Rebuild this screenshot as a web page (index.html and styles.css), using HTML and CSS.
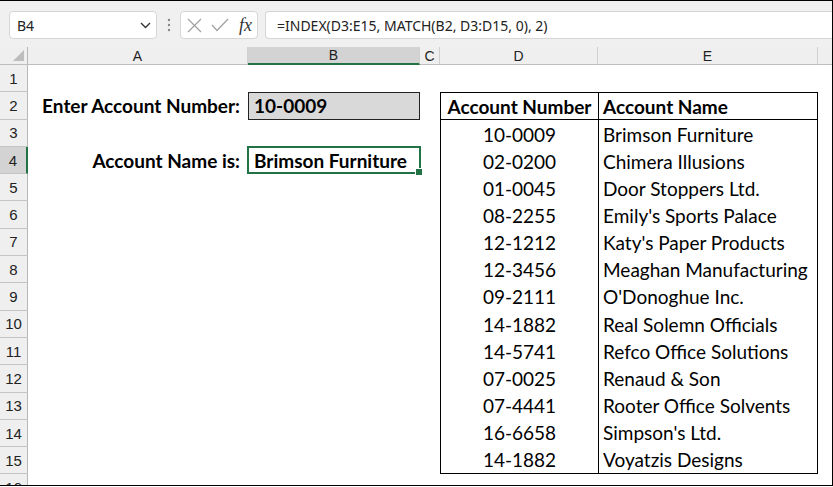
FILE: index.html
```html
<!DOCTYPE html>
<html>
<head>
<meta charset="utf-8">
<link rel="stylesheet" href="styles.css">
</head>
<body>
<div class="window">
  <div class="fbar">
    <div class="namebox">
      <span class="ref">B4</span>
      <svg class="chev" width="11" height="7" viewBox="0 0 11 7"><polyline points="1,1 5.5,5.5 10,1" fill="none" stroke="#333" stroke-width="1.4"/></svg>
    </div>
    <div class="dots">
      <svg width="4" height="14" viewBox="0 0 4 14"><circle cx="2" cy="2" r="1.2" fill="#888"/><circle cx="2" cy="7" r="1.2" fill="#888"/><circle cx="2" cy="12" r="1.2" fill="#888"/></svg>
    </div>
    <div class="fnbox">
      <svg class="ico" width="15" height="15" viewBox="0 0 15 15"><path d="M1 1 L14 14 M14 1 L1 14" stroke="#a0a0a0" stroke-width="1.2" fill="none"/></svg>
      <svg class="ico" width="18" height="14" viewBox="0 0 18 14"><polyline points="1,7 6,12.5 17,1" fill="none" stroke="#a0a0a0" stroke-width="1.2"/></svg>
      <span class="fx">fx</span>
    </div>
    <div class="formula">=INDEX(D3:E15, MATCH(B2, D3:D15, 0), 2)</div>
  </div>
  <div class="sheet">
    <div class="colheads">
      <div class="ch corner"><svg width="11" height="11" viewBox="0 0 11 11"><polygon points="11,0 11,11 0,11" fill="#bdbdbd"/></svg></div>
      <div class="ch ca">A</div>
      <div class="ch cb sel">B</div>
      <div class="ch cc">C</div>
      <div class="ch cd">D</div>
      <div class="ch ce">E</div>
      <div class="ch cf"></div>
    </div>
    <div class="body">
      <div class="rowheads">
        <div class="rh">1</div>
        <div class="rh">2</div>
        <div class="rh">3</div>
        <div class="rh sel">4</div>
        <div class="rh">5</div>
        <div class="rh">6</div>
        <div class="rh">7</div>
        <div class="rh">8</div>
        <div class="rh">9</div>
        <div class="rh">10</div>
        <div class="rh">11</div>
        <div class="rh">12</div>
        <div class="rh">13</div>
        <div class="rh">14</div>
        <div class="rh">15</div>
        <div class="rh">16</div>
      </div>
      <div class="cells">
        <div class="label lab-2">Enter Account Number:</div>
        <div class="input">10-0009</div>
        <div class="label lab-4">Account Name is:</div>
        <div class="output">Brimson Furniture</div>
        <div class="table">
          <div class="td num th">Account Number</div>
          <div class="td name th">Account Name</div>
          <div class="td num">10-0009</div><div class="td name">Brimson Furniture</div>
          <div class="td num">02-0200</div><div class="td name">Chimera Illusions</div>
          <div class="td num">01-0045</div><div class="td name">Door Stoppers Ltd.</div>
          <div class="td num">08-2255</div><div class="td name">Emily's Sports Palace</div>
          <div class="td num">12-1212</div><div class="td name">Katy's Paper Products</div>
          <div class="td num">12-3456</div><div class="td name">Meaghan Manufacturing</div>
          <div class="td num">09-2111</div><div class="td name">O'Donoghue Inc.</div>
          <div class="td num">14-1882</div><div class="td name">Real Solemn Officials</div>
          <div class="td num">14-5741</div><div class="td name">Refco Office Solutions</div>
          <div class="td num">07-0025</div><div class="td name">Renaud &amp; Son</div>
          <div class="td num">07-4441</div><div class="td name">Rooter Office Solvents</div>
          <div class="td num">16-6658</div><div class="td name">Simpson's Ltd.</div>
          <div class="td num">14-1882</div><div class="td name">Voyatzis Designs</div>
        </div>
      </div>
    </div>
  </div>
</div>
</body>
</html>
```

FILE: styles.css
```css
* { box-sizing: border-box; }
html, body { margin: 0; padding: 0; background: #fff; }

.window {
  width: 833px;
  height: 486px;
  border: 1px solid #000;
  border-left: none;
  overflow: hidden;
  display: flex;
  flex-direction: column;
  font-family: "Noto Sans", sans-serif;
  color: #000;
}

/* formula bar */
.fbar {
  height: 46px;
  flex: none;
  background: #f0f0f0;
  display: flex;
  align-items: flex-start;
  padding: 10px 0 0 9px;
}
.namebox {
  width: 148px;
  height: 28px;
  background: #fff;
  border: 1px solid #d6d6d6;
  border-radius: 4px;
  display: flex;
  align-items: center;
  justify-content: space-between;
  padding: 0 5px 0 7px;
  font-size: 14px;
  color: #222;
}
.chev { margin-top: 1px; }
.dots {
  width: 23px;
  height: 28px;
  display: flex;
  align-items: center;
  justify-content: center;
}
.fnbox {
  width: 78px;
  height: 28px;
  background: #fff;
  border: 1px solid #d6d6d6;
  border-radius: 4px;
  display: flex;
  align-items: center;
  padding-left: 6px;
  gap: 9px;
}
.fx {
  font-family: "Liberation Serif", serif;
  font-style: italic;
  font-size: 18px;
  color: #333;
  margin-left: 1px;
  line-height: 1;
}
.formula {
  flex: 1;
  height: 28px;
  margin-left: 7px;
  background: #fff;
  border: 1px solid #d6d6d6;
  border-right: none;
  border-radius: 4px 0 0 4px;
  display: flex;
  align-items: center;
  padding-left: 11px;
  font-size: 14px;
  color: #222;
}

/* sheet */
.sheet { flex: 1; display: flex; flex-direction: column; }
.colheads {
  height: 18px;
  flex: none;
  display: flex;
  background: #efefef;
}
.ch {
  height: 18px;
  border-right: 1px solid #d0d0d0;
  border-bottom: 1px solid #bdbdbd;
  font-family: "Liberation Sans", sans-serif;
  font-size: 14px;
  color: #222;
  display: flex;
  align-items: center;
  justify-content: center;
}
.corner { width: 28px; justify-content: flex-end; align-items: flex-end; padding: 0 3px 3px 0; border-right-color: #b8b8b8; }
.ca { width: 220px; }
.cb { width: 172px; }
.cc { width: 20px; }
.cd { width: 158px; }
.ce { width: 220px; }
.cf { flex: 1; border-right: none; }
.ch.sel { background: #d3d3d3; border-bottom: 2px solid #217346; color: #1d1d1d; }

.body { flex: 1; display: flex; overflow: hidden; }
.rowheads { width: 28px; flex: none; display: flex; flex-direction: column; }
.rh {
  height: 27.3px;
  flex: none;
  background: #efefef;
  border-bottom: 1px solid #c4c4c4;
  border-right: 1px solid #b8b8b8;
  font-family: "Liberation Sans", sans-serif;
  font-size: 15px;
  color: #222;
  display: flex;
  align-items: center;
  justify-content: center;
}
.rh.sel { background: #d3d3d3; border-right: 2px solid #217346; }

.cells {
  flex: 1;
  display: grid;
  grid-template-columns: 220px 172px 20px 158px 220px 1fr;
  grid-template-rows: repeat(16, 27.3px);
  font-family: "Lato", sans-serif;
  font-size: 19px;
  color: #000;
}
.label {
  grid-column: 1;
  font-weight: 700;
  display: flex;
  align-items: center;
  justify-content: flex-end;
  padding-right: 8px;
  white-space: nowrap;
}
.lab-2 { grid-row: 2; }
.lab-4 { grid-row: 4; }
.input {
  grid-row: 2;
  grid-column: 2;
  background: #d9d9d9;
  border: 1px solid #222;
  font-weight: 700;
  display: flex;
  align-items: center;
  padding-left: 5px;
}
.output {
  grid-row: 4;
  grid-column: 2;
  margin: -1px -1px 0 -1px;
  border: 2px solid #217346;
  font-weight: 700;
  display: flex;
  align-items: center;
  padding-left: 5px;
  white-space: nowrap;
  position: relative;
}
.output::after {
  content: "";
  position: absolute;
  right: -4px;
  bottom: -4px;
  width: 6px;
  height: 6px;
  background: #217346;
  border: 1px solid #fff;
}
.table {
  grid-row: 2 / 16;
  grid-column: 4 / 6;
  border: 1px solid #000;
  display: grid;
  grid-template-columns: 157px 1fr;
  grid-template-rows: repeat(14, 1fr);
}
.td {
  display: flex;
  align-items: center;
  white-space: nowrap;
}
.td.num { justify-content: center; }
.td.name { border-left: 1px solid #000; padding-left: 4px; }
.th { font-weight: 700; border-bottom: 1px solid #000; }
```
